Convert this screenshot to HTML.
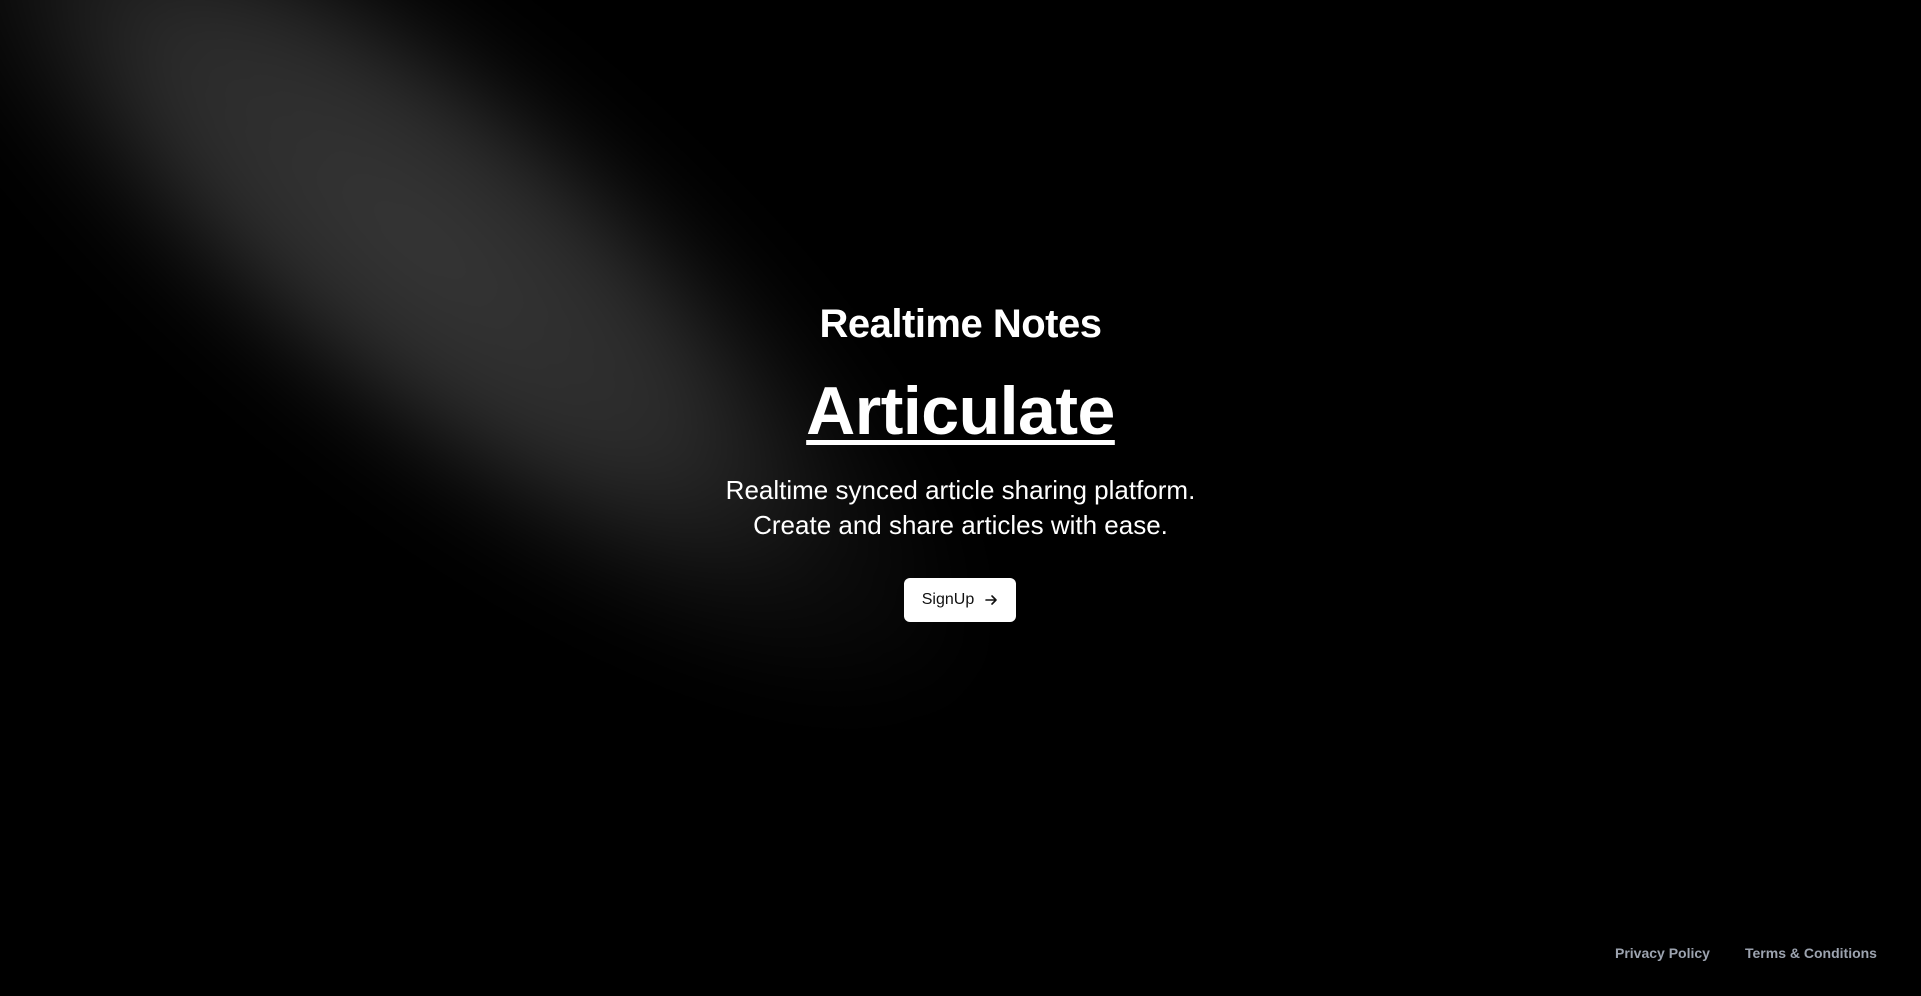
<!DOCTYPE html>
<html><head><meta charset="utf-8"><style>
html,body{margin:0;padding:0;width:1921px;height:996px;background:#000;overflow:hidden;font-family:"Segoe UI","Liberation Sans",sans-serif;}
.beam{position:absolute;left:-280px;top:10px;width:1400px;height:460px;transform:rotate(39deg);background:radial-gradient(closest-side,rgba(54,54,54,1) 0%,rgba(50,50,50,0.85) 45%,rgba(30,30,30,0.4) 75%,rgba(0,0,0,0) 100%);filter:blur(30px);}
.c{position:absolute;left:0;width:1921px;text-align:center;color:#fff;}
h1{margin:0;font-size:40px;font-weight:bold;letter-spacing:-0.5px;}
h2{margin:0;font-size:68px;font-weight:bold;text-decoration:underline;text-decoration-thickness:5px;text-underline-offset:6px;letter-spacing:-0.5px;}
p{margin:0;font-size:26px;line-height:35px;}
.btn{position:absolute;left:904px;top:578px;width:112px;height:44px;background:#fff;border-radius:6px;color:#111;font-size:16px;display:flex;align-items:center;justify-content:center;gap:10px;}
.f{position:absolute;top:945px;font-size:14px;color:#9ca3af;font-weight:600;}
</style></head><body>
<div class="beam"></div>
<div class="c" style="top:302px"><h1>Realtime Notes</h1></div>
<div class="c" style="top:372px"><h2>Articulate</h2></div>
<div class="c" style="top:473px"><p>Realtime synced article sharing platform.<br>Create and share articles with ease.</p></div>
<div class="btn"><span>SignUp</span><svg width="14" height="14" viewBox="0 0 14 14"><path d="M2 7h10M8 3l4 4-4 4" stroke="#111" stroke-width="1.6" fill="none" stroke-linecap="round" stroke-linejoin="round"/></svg></div>
<div class="f" style="left:1615px">Privacy Policy</div>
<div class="f" style="left:1745px">Terms &amp; Conditions</div>
</body></html>
